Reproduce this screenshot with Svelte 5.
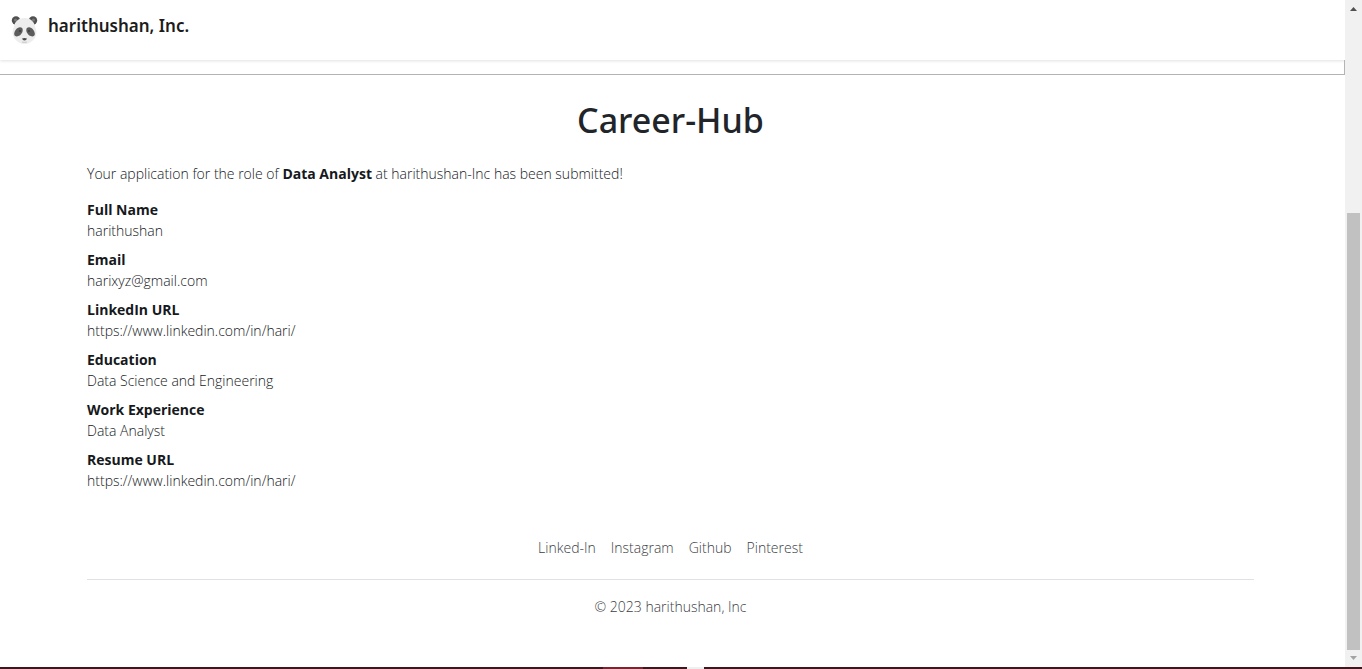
<script>
  const details = [
    ['Full Name', 'harithushan'],
    ['Email', 'harixyz@gmail.com'],
    ['LinkedIn URL', 'https://www.linkedin.com/in/hari/'],
    ['Education', 'Data Science and Engineering'],
    ['Work Experience', 'Data Analyst'],
    ['Resume URL', 'https://www.linkedin.com/in/hari/'],
  ];
  const links = ['Linked-In', 'Instagram', 'Github', 'Pinterest'];
</script>

<div class="window">
  <div class="view">
    <div class="page">
      <header>
        <a class="brand" href="#home">
          <svg width="28" height="30" viewBox="0 0 28 30" aria-hidden="true">
            <circle cx="5" cy="5.500" r="4.2" fill="#505050" />
            <circle cx="22" cy="5.500" r="4.2" fill="#505050" />
            <circle cx="4.6" cy="5" r="1.6" fill="#777" />
            <circle cx="22.4" cy="5" r="1.6" fill="#777" />
            <path d="M13.500 3C19 3 23 6 24 11.500C26 16 26 20 23.500 23.500C21 27 17.500 29 13.500 29C9.500 29 6 27 3.500 23.500C1 20 1 16 3 11.500C4 6 8 3 13.500 3Z" fill="#ededed" />
            <path d="M8.600 12.200C11.800 11.800 12.400 15 11 17.800C9.500 20.800 6 22.400 3.900 20.800C1.800 18.800 4.600 12.800 8.600 12.200Z" fill="#5c5c5c" />
            <path d="M18.400 12.200C15.200 11.800 14.600 15 16 17.800C17.500 20.800 21 22.400 23.100 20.800C25.200 18.800 22.400 12.800 18.400 12.200Z" fill="#5c5c5c" />
            <circle cx="9" cy="16" r="1" fill="#3c3c3c" />
            <circle cx="18" cy="16" r="1" fill="#3c3c3c" />
            <path d="M11 23.400Q13.500 22.400 16 23.400Q15.400 25.200 13.500 25.400Q11.600 25.200 11 23.400Z" fill="#4a4a4a" />
            <path d="M11 27Q13.500 27.800 16 27" fill="none" stroke="#bbb" stroke-width="0.8" />
          </svg>
          <span>harithushan, Inc.</span>
        </a>
      </header>
      <div class="frame-end"></div>
      <div class="content">
        <main>
          <h1>Career-Hub</h1>
          <p>Your application for the role of <b>Data Analyst</b> at harithushan-Inc has been submitted!</p>
          <dl>
            {#each details as [label, value]}
              <div>
                <dt>{label}</dt>
                <dd>{value}</dd>
              </div>
            {/each}
          </dl>
          <footer>
            <nav>
              {#each links as link}
                <a href="#{link}">{link}</a>
              {/each}
            </nav>
            <small>© 2023 harithushan, Inc</small>
          </footer>
        </main>
      </div>
    </div>
    <div class="scrollbar" aria-hidden="true">
      <svg width="17" height="17" viewBox="0 0 17 17"><path d="M5 11h7L8.500 7z" fill="#505050" /></svg>
      <div class="track"><div class="thumb"></div></div>
      <svg width="17" height="17" viewBox="0 0 17 17"><path d="M5 6h7L8.500 10z" fill="#a3a3a3" /></svg>
    </div>
  </div>
  <div class="edge"></div>
</div>

<style>
  :global(body) {
    margin: 0;
    background: #fff;
  }
  .window {
    display: flex;
    flex-direction: column;
    min-height: 100vh;
    font: 300 14px/21px "Segoe UI", "Open Sans", sans-serif;
    color: #16191c;
  }
  .view {
    display: flex;
    flex: 1;
  }
  .page {
    flex: 1;
    min-width: 0;
  }
  header {
    box-sizing: border-box;
    height: 60px;
    padding: 15px 11px;
    box-shadow: 0 1px 3px rgba(0, 0, 0, 0.12);
  }
  .brand,
  h1 {
    font-family: "Segoe UI", "Noto Sans", sans-serif;
  }
  .brand {
    display: flex;
    gap: 9px;
    font-size: 17px;
    font-weight: 600;
    line-height: 22px;
    color: #1c1c1c;
    text-decoration: none;
  }
  .frame-end {
    height: 14px;
    border: solid #b4b4b4;
    border-width: 0 1px 1px 0;
  }
  .content {
    padding-right: 4px;
  }
  main {
    box-sizing: border-box;
    max-width: 1189px;
    margin: 0 auto;
    padding: 24px 11px 0;
  }
  h1 {
    margin: 0 0 21px;
    font-size: 34px;
    line-height: 43px;
    font-weight: 500;
    text-align: center;
    color: #212529;
  }
  p {
    margin: 0 0 15px;
  }
  b,
  dt {
    font-weight: 700;
  }
  dl {
    display: grid;
    gap: 8px;
    margin: 0;
  }
  dd {
    margin: 0;
  }
  footer {
    padding-top: 46px;
    text-align: center;
  }
  nav {
    display: flex;
    justify-content: center;
    gap: 15px;
    padding-bottom: 21px;
    margin-bottom: 16px;
    border-bottom: 1px solid #dee2e6;
  }
  nav a {
    color: #3b4045;
    text-decoration: none;
  }
  small {
    font-size: 14px;
    color: #3b4045;
  }
  .scrollbar {
    display: flex;
    flex-direction: column;
    width: 17px;
    background: #f1f1f1;
  }
  .track {
    display: flex;
    flex-direction: column;
    justify-content: flex-end;
    flex: 1;
  }
  .thumb {
    height: 69%;
    margin: 0 2px;
    background: #c1c1c1;
  }
  .edge {
    height: 2px;
    background: linear-gradient(
      90deg,
      #42141c 603px,
      #7c2431 603px 643px,
      #42141c 643px 687px,
      #f0f0f0 687px 704px,
      #42141c 704px
    );
  }
</style>
